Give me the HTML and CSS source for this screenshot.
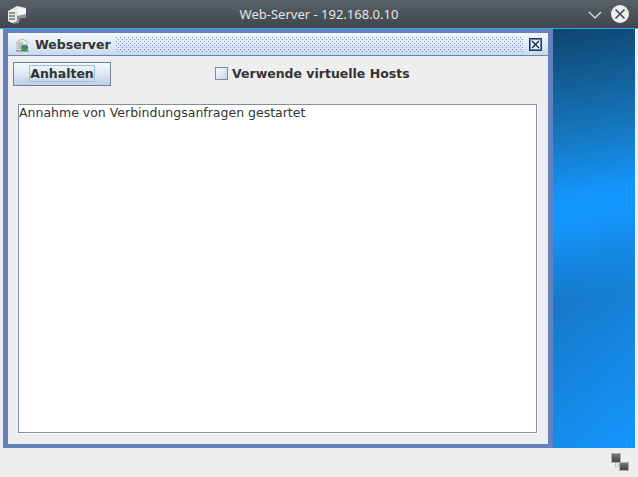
FILE: index.html
```html
<!DOCTYPE html>
<html lang="de">
<head>
<meta charset="utf-8">
<title>Web-Server</title>
<link rel="stylesheet" href="styles.css">
</head>
<body>
<header class="titlebar">
  <svg class="app-icon" width="22" height="20" viewBox="0 0 22 20">
    <path d="M2 7 L11 2 L20 4 L20 13 L14 13 L12 18 L6 19 L2 17 Z" fill="#e6e8e8"/>
    <path d="M11 12 L20 10 L20 14 L14 14 L13 19 L6 20 L11 17 Z" fill="#8b9092"/>
    <path d="M11 3 L20 5 L20 10 L12 11 Z" fill="#f4f5f5"/>
    <path d="M3 9 H9 M3 12 H9 M3 15 H9" stroke="#3b4246" stroke-width="1.2"/>
  </svg>
  <span class="app-title">Web-Server - 192.168.0.10</span>
  <svg class="chevron" width="14" height="8" viewBox="0 0 14 8"><path d="M1 1 L7 7 L13 1" fill="none" stroke="#e8eaea" stroke-width="1.2"/></svg>
  <svg class="close" width="18" height="18" viewBox="0 0 18 18">
    <circle cx="9" cy="9" r="9" fill="#eeeeee"/>
    <path d="M4.5 4.5 L13.5 13.5 M13.5 4.5 L4.5 13.5" stroke="#3f464b" stroke-width="1.6"/>
  </svg>
</header>
<main class="desktop">
  <section class="frame">
    <div class="frame-title">
      <svg class="frame-icon" width="15" height="15" viewBox="0 0 15 15">
        <path d="M2 4 L7 1 L12 3 L12 9 L2 11 Z" fill="#ececea" stroke="#8d9592" stroke-width=".6"/>
        <path d="M3 5 H8 M3 7 H8 M3 9 H6" stroke="#7c8280" stroke-width=".8"/>
        <rect x="1" y="12" width="13" height="2" fill="#a3a8a1"/>
        <circle cx="9.5" cy="10" r="3.6" fill="#45a63f"/>
        <path d="M7.5 8 L10 10.5 L8.5 12.5 M11 7.5 L12.5 10" stroke="#3b56c8" stroke-width="1.2" fill="none"/>
      </svg>
      <span class="frame-name">Webserver</span>
      <svg class="dots" height="15">
        <defs>
          <pattern id="dot-grip" width="4" height="4" patternUnits="userSpaceOnUse">
            <rect x="0" y="0" width="1" height="1" fill="#7089c0"/>
            <rect x="2" y="2" width="1" height="1" fill="#7089c0"/>
          </pattern>
        </defs>
        <rect width="100%" height="100%" fill="url(#dot-grip)"/>
      </svg>
      <span class="frame-close">
        <svg width="13" height="13" viewBox="0 0 13 13">
          <rect x=".5" y=".5" width="12" height="12" fill="#e6eef8" stroke="#27345a"/>
          <rect x="1.5" y="1.5" width="10" height="10" fill="none" stroke="#6382bf"/>
          <path d="M3 3 L10 10 M10 3 L3 10" stroke="#101828" stroke-width="1.1"/>
        </svg>
      </span>
    </div>
    <div class="frame-body">
      <div class="controls">
        <button class="button" type="button"><span class="focus">Anhalten</span></button>
        <label class="check"><span class="box"></span><span class="check-label">Verwende virtuelle Hosts</span></label>
      </div>
      <div class="log">Annahme von Verbindungsanfragen gestartet</div>
    </div>
  </section>
  <div class="wallpaper"></div>
</main>
<footer class="status">
  <svg width="18" height="18" viewBox="0 0 18 18">
    <defs>
      <linearGradient id="screen" x1="0" y1="0" x2="0" y2="1">
        <stop offset="0" stop-color="#7a7a7a"/>
        <stop offset="1" stop-color="#3f3f3f"/>
      </linearGradient>
    </defs>
    <path d="M4.5 9 V14 H8 M6.5 9 V12 H8" fill="none" stroke="#c0c0c0"/>
    <rect x=".5" y=".5" width="9" height="9" fill="url(#screen)" stroke="#b0b0b0"/>
    <rect x="8.5" y="9.5" width="9" height="8" fill="url(#screen)" stroke="#b0b0b0"/>
  </svg>
</footer>
</body>
</html>
```
FILE: styles.css
```css
* { box-sizing: border-box; }
html, body { margin: 0; height: 100%; }
body {
  width: 638px;
  height: 477px;
  overflow: hidden;
  display: flex;
  flex-direction: column;
  background: #eeeeee;
  font-family: "DejaVu Sans", sans-serif;
  color: #333333;
}
.titlebar {
  height: 29px;
  flex: none;
  display: flex;
  align-items: center;
  background: linear-gradient(#596066, #40474c);
  border-bottom: 1px solid #33a5ec;
  padding: 0 8px 0 6px;
}
.app-icon { flex: none; }
.app-title {
  flex: 1;
  text-align: center;
  color: #e4e6e7;
  font: 13px "Noto Sans", sans-serif;
  padding-left: 22px;
}
.chevron { flex: none; margin-right: 9px; margin-top: 1px; }
.close { flex: none; margin-right: 1px; }
.desktop {
  height: 419px;
  flex: none;
  display: flex;
  padding: 0 3px;
}
.frame {
  width: 550px;
  flex: none;
  display: flex;
  flex-direction: column;
  border: 5px solid #6382bf;
  border-top-width: 4px;
  border-bottom-width: 4px;
  background: #eeeeee;
}
.frame-title {
  height: 23px;
  flex: none;
  display: flex;
  align-items: center;
  padding: 0 5px 0 7px;
  background: linear-gradient(#f4f7fb, #dde8f3 60%, #c9d9ea);
  border-bottom: 1px solid #6382bf;
  font-size: 12.5px;
  font-weight: bold;
}
.frame-icon { flex: none; margin-top: 3px; }
.frame-name { margin-left: 5px; margin-right: 5px; }
.dots { flex: 1; min-width: 0; }
.frame-close { flex: none; display: flex; margin-left: 6px; margin-right: 1px; }
.frame-body {
  flex: 1;
  display: flex;
  flex-direction: column;
  padding: 6px 11px 11px 10px;
}
.controls {
  display: flex;
  align-items: center;
  height: 24px;
  margin-left: -5px;
}
.button {
  width: 98px;
  height: 24px;
  padding: 0 0 1px;
  border: 1px solid #6e8297;
  background: linear-gradient(#f5f8fb, #dce7f2 50%, #bdd0e5);
  font: bold 12.5px "DejaVu Sans", sans-serif;
  color: #333333;
  display: flex;
  align-items: center;
  justify-content: center;
}
.focus { border: 1px solid #a3bdd6; line-height: 15px; }
.check {
  display: flex;
  align-items: center;
  gap: 4px;
  margin-left: 104px;
  margin-bottom: 1px;
  font-size: 12.5px;
  font-weight: bold;
}
.box {
  width: 13px;
  height: 13px;
  border: 1px solid #7a8ea3;
  background: linear-gradient(135deg, #f6f9fc, #c3d5e8);
}
.log {
  flex: 1;
  margin-top: 18px;
  padding: 0;
  background: #ffffff;
  border: 1px solid #7f8f9e;
  box-shadow: 1px 1px 0 #ffffff;
  font-size: 12.5px;
  line-height: 16px;
}
.wallpaper {
  flex: 1;
  background:
    linear-gradient(170deg, #0f4570 0%, #1677bd 25%, #1496ff 40%, #1496ff 45%, rgba(20, 150, 255, 0) 64%),
    linear-gradient(140deg, #1678c6 55%, #1596ff 100%);
}
.status {
  flex: 1;
  display: flex;
  justify-content: flex-end;
  padding: 5px 9px 0 0;
}
```
